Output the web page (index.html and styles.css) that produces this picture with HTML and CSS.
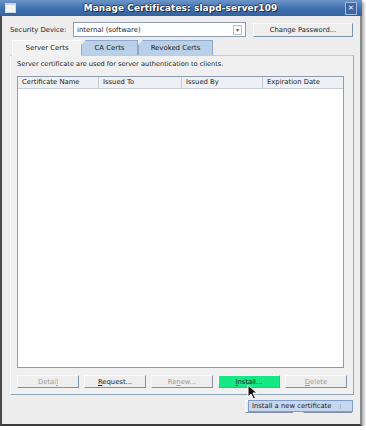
FILE: index.html
```html
<!DOCTYPE html>
<html lang="en">
<head>
    <meta charset="UTF-8">
    <title>Manage Certificates: slapd-server109</title>
    <link rel="stylesheet" href="styles.css">
</head>
<body>
    <div class="window">
        <!-- Title bar -->
        <div class="titlebar">
            <span class="win-icon"></span>
            <span class="title">Manage Certificates: slapd-server109</span>
            <span class="win-close">&#x2715;</span>
        </div>

        <!-- Security device row -->
        <div class="device-row">
            <label class="device-label">Security Device:</label>
            <div class="combo">
                <span class="combo-text">internal (software)</span>
                <span class="combo-arrow">&#x25BE;</span>
            </div>
            <button class="btn btn-wide">Change Password...</button>
        </div>

        <!-- Tabs -->
        <div class="tabs">
            <div class="tab tab-active">Server Certs</div>
            <div class="tab tab-ca">CA Certs</div>
            <div class="tab tab-revoked">Revoked Certs</div>
        </div>

        <div class="panel">
            <p class="panel-desc">Server certificate are used for server authentication to clients.</p>

            <div class="cert-table">
                <div class="cert-head">
                    <span class="col col-name">Certificate Name</span>
                    <span class="col col-to">Issued To</span>
                    <span class="col col-by">Issued By</span>
                    <span class="col col-exp">Expiration Date</span>
                </div>
            </div>

            <div class="panel-buttons">
                <button class="btn btn-off">Detai<u>l</u></button>
                <button class="btn"><u>R</u>equest...</button>
                <button class="btn btn-off">Re<u>n</u>ew...</button>
                <button class="btn btn-hover"><u>I</u>nstall...</button>
                <button class="btn btn-off"><u>D</u>elete</button>
            </div>
        </div>

        <div class="dialog-buttons">
            <button class="btn btn-close"><u>C</u>lose</button>
            <button class="btn btn-help"><u>H</u>elp</button>
        </div>

        <!-- Tooltip and mouse pointer over the buttons -->
        <div class="tooltip">Install a new certificate <span class="tooltip-key">-|</span></div>
        <svg class="cursor" width="11" height="16" viewBox="0 0 11 16">
            <path d="M1 1 L1 13 L4 10 L6.5 15 L8.5 14 L6 9 L10 9 Z" fill="#111" stroke="#fff" stroke-width="1"/>
        </svg>
    </div>
</body>
</html>
```

FILE: styles.css
```css
body {
    margin: 0;
    background-color: #fff;
    font-family: "DejaVu Sans", sans-serif;
    font-size: 6.6px;
    color: #222;
}

.window {
    position: relative;
    width: 362px;
    height: 426px;
    box-sizing: border-box;
    background-color: #ededed;
    border-left: 2px solid #4a4a4a;
    border-right: 2px solid #8a8a8a;
    border-bottom: 2px solid #3a3a3a;
    box-shadow: 2px 2px 3px rgba(0, 0, 0, 0.35);
}

.titlebar {
    display: flex;
    align-items: center;
    height: 16px;
    margin: 0 -2px;
    background: linear-gradient(#6c95c9, #3f6fac 55%, #33629f);
    position: relative;
}

.win-icon {
    width: 9px;
    height: 7px;
    margin-left: 5px;
    background-color: #f4f4f4;
    border: 1px solid #d0d8e4;
    border-top: 2px solid #c8d2de;
}

.title {
    flex: 1;
    text-align: center;
    color: #fff;
    font-weight: bold;
    font-size: 8.9px;
    letter-spacing: 0.15px;
    text-shadow: 1px 1px 0 #1c2c44, -1px 0 0 #2a3f5e, 0 -1px 0 #2a3f5e;
}

.win-close {
    width: 10px;
    height: 11px;
    margin-right: 5px;
    background-color: #3a68a8;
    border: 1px solid #9fbbe0;
    color: #fff;
    font-size: 7px;
    font-weight: bold;
    line-height: 11px;
    text-align: center;
}

.device-row {
    display: flex;
    align-items: center;
    height: 15px;
    margin-top: 6px;
    padding-left: 8px;
}

.device-label {
    width: 63px;
    font-size: 6.9px;
}

.combo {
    display: flex;
    align-items: center;
    width: 173px;
    height: 15px;
    box-sizing: border-box;
    background-color: #fff;
    border: 1px solid #8d9cb0;
}

.combo-text {
    flex: 1;
    padding-left: 3px;
    font-size: 6.9px;
}

.combo-arrow {
    width: 7px;
    height: 8px;
    margin-right: 3px;
    border: 1px solid #b8c0cc;
    font-size: 6px;
    line-height: 8px;
    text-align: center;
    color: #555;
}

.btn {
    height: 13px;
    padding: 0;
    box-sizing: border-box;
    background-color: #eeeeee;
    border: 1px solid #fafafa;
    border-right-color: #7f91a8;
    border-bottom-color: #7f91a8;
    font-family: "DejaVu Sans", sans-serif;
    font-size: 6.8px;
    color: #222;
    cursor: pointer;
}

.btn-wide {
    width: 100px;
    height: 14px;
    margin-left: 7px;
}

.tabs {
    display: flex;
    height: 15px;
    margin-top: 3px;
    padding-left: 10px;
    font-size: 6.9px;
}

.tab {
    height: 15px;
    box-sizing: border-box;
    line-height: 14px;
    text-align: center;
}

.tab-active {
    width: 69px;
    background-color: #f2f2f2;
    border-top: 1px solid #fff;
    border-left: 1px solid #fff;
    position: relative;
    z-index: 1;
    height: 16px;
}

.tab-ca,
.tab-revoked {
    background-color: #b9d0e8;
    border: 1px solid #8fa9c9;
    border-bottom: none;
    clip-path: polygon(5px 0, 100% 0, 100% 100%, 0 100%, 0 5px);
}

.tab-ca {
    width: 57px;
}

.tab-revoked {
    width: 75px;
}

.panel {
    width: 344px;
    height: 340px;
    margin-left: 8px;
    box-sizing: border-box;
    background-color: #f0f0f0;
    border-top: 1px solid #c4cad3;
    border-left: 1px solid #fff;
    border-right: 1px solid #9aa4b2;
    border-bottom: 1px solid #8fa3bd;
    padding: 3px 0 0 6px;
}

.panel-desc {
    margin: 0;
    height: 10px;
    line-height: 10px;
}

.cert-table {
    width: 327px;
    height: 292px;
    margin-top: 7px;
    box-sizing: border-box;
    background-color: #fff;
    border: 1px solid #8d9cb0;
}

.cert-head {
    display: flex;
    height: 11px;
    background-color: #eef0f4;
    border-bottom: 1px solid #c5ccd6;
    font-size: 6.8px;
}

.col {
    box-sizing: border-box;
    padding-left: 4px;
    line-height: 11px;
    border-right: 1px solid #c5ccd6;
}

.col-name {
    width: 81px;
}

.col-to {
    width: 83px;
}

.col-by {
    width: 81px;
}

.col-exp {
    flex: 1;
    border-right: none;
}

.panel-buttons {
    display: flex;
    gap: 5px;
    margin-top: 7px;
}

.panel-buttons .btn {
    width: 62px;
}

.btn-off {
    color: #9c9c9c;
}

.btn-hover {
    background-color: #17e886;
}

.dialog-buttons {
    display: flex;
    gap: 10px;
    margin-top: 5px;
    padding-left: 243px;
}

.btn-close {
    width: 48px;
}

.btn-help {
    width: 49px;
}

.tooltip {
    position: absolute;
    left: 246px;
    top: 400px;
    width: 105px;
    height: 12px;
    box-sizing: border-box;
    padding-left: 3px;
    background-color: #c7d7ed;
    border: 1px solid #7f9dc8;
    line-height: 10px;
    font-size: 6.8px;
    color: #1a1a2a;
}

.tooltip-key {
    margin-left: 4px;
    color: #6d8fc4;
    font-size: 5px;
}

.cursor {
    position: absolute;
    left: 245px;
    top: 384px;
}
```
